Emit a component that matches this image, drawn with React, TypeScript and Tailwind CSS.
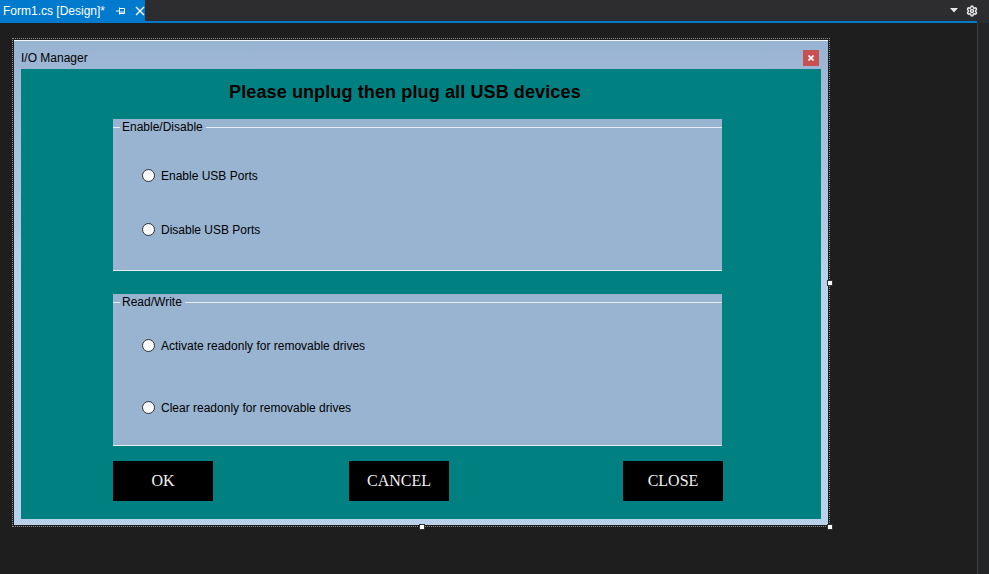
import { Settings } from "lucide-react";

// Radio row inside a group box
const Radio = ({ label }: { label: string }) => (
  <div className="flex h-4 items-center gap-[6px] pl-[29px]">
    <span className="h-[13px] w-[13px] rounded-full border border-[#333333] bg-gradient-to-b from-[#f4f4f4] to-white" />
    <span className="pt-px text-[12px] text-black">{label}</span>
  </div>
);

const GroupBox = ({ title, children }: { title: string; children: React.ReactNode }) => (
  <div className="flex h-[152px] w-[609px] flex-col border-b border-[#e4ecf4] bg-[#99b4d1]">
    <div className="flex h-4 items-center">
      <span className="h-px w-[7px] bg-[#e4ecf4]" />
      <span className="ml-[2px] mr-[3px] text-[12px] leading-4 text-black">{title}</span>
      <span className="h-px flex-1 bg-[#e4ecf4]" />
    </div>
    {children}
  </div>
);

const FormButton = ({ label, className = "" }: { label: string; className?: string }) => (
  <button
    className={`flex h-10 w-[100px] items-center justify-center bg-black font-['Liberation_Serif',serif] text-[16px] uppercase text-[#f2f2f2] ${className}`}
  >
    {label}
  </button>
);

const Handle = ({ className }: { className: string }) => (
  <span className={`absolute h-[6px] w-[6px] border border-[#333333] bg-white ${className}`} />
);

export default function App() {
  return (
    <div className="flex h-[574px] w-[989px] flex-col overflow-hidden bg-[#1e1e1e] font-['Liberation_Sans',Arial,sans-serif]">
      {/* document tab bar */}
      <div className="flex h-[21px] bg-[#2d2d30]">
        <div className="flex w-[145px] shrink-0 items-center whitespace-nowrap bg-[#007acc] pl-[3px] text-[12px] text-white">
          <span>Form1.cs [Design]*</span>
          <svg className="ml-[11px] shrink-0" width="10" height="8" viewBox="0 0 10 8" fill="none" stroke="white" strokeWidth="1">
            <path d="M0 4h3.5M3.5 0.5v7M3.5 1.5h5v5h-5M3.5 5h5" />
          </svg>
          <svg className="ml-[9px] shrink-0" width="10" height="10" viewBox="0 0 10 10" stroke="white" strokeWidth="1.4">
            <path d="M1 1l8 8M9 1l-8 8" />
          </svg>
        </div>
        <div className="flex flex-1 items-center justify-end gap-[8px] pr-[11px]">
          <svg width="8" height="5" viewBox="0 0 8 5">
            <path d="M0 0h8L4 4.5z" fill="#e6e6e6" />
          </svg>
          <Settings size={12} strokeWidth={3} className="text-[#e6e6e6]" />
        </div>
      </div>
      <div className="flex h-[2px]">
        <div className="w-[977px] bg-[#007acc]" />
        <div className="flex-1 bg-[#2d2d30]" />
      </div>

      <div className="flex flex-1">
        {/* designer surface */}
        <div className="flex-1 pl-[12px] pt-[15px]">
          <div className="relative w-fit border border-dotted border-[#8a8a8a] p-px">
            <div className="flex h-[485px] w-[814px] flex-col border-t border-[#f4f8fc] bg-gradient-to-b from-[#99b3d2] via-[#b9d1ea] to-[#b9d1ea]">
              <div className="flex h-[28px] items-center pl-[7px] pr-[9px] pt-[5px]">
                <span className="text-[12px] text-black">I/O Manager</span>
                <span className="ml-auto flex h-4 w-4 items-center justify-center bg-[#c75050]">
                  <svg width="6" height="6" viewBox="0 0 6 6" stroke="white" strokeWidth="1.6">
                    <path d="M0.5 0.5l5 5M5.5 0.5l-5 5" />
                  </svg>
                </span>
              </div>
              <div className="mx-[7px] flex h-[450px] flex-col items-start bg-[#008080] pl-[92px] pt-[12px]">
                <h1 className="ml-[116px] h-[22px] whitespace-nowrap text-[18px] font-bold leading-[22px] tracking-[0.12px] text-black">
                  Please unplug then plug all USB devices
                </h1>
                <div className="mt-[16px] flex flex-col">
                  <GroupBox title="Enable/Disable">
                    <div className="mt-[32px]">
                      <Radio label="Enable USB Ports" />
                    </div>
                    <div className="mt-[38px]">
                      <Radio label="Disable USB Ports" />
                    </div>
                  </GroupBox>
                  <div className="mt-[23px]">
                    <GroupBox title="Read/Write">
                      <div className="mt-[27px]">
                        <Radio label="Activate readonly for removable drives" />
                      </div>
                      <div className="mt-[46px]">
                        <Radio label="Clear readonly for removable drives" />
                      </div>
                    </GroupBox>
                  </div>
                  <div className="mt-[15px] flex w-[610px]">
                    <FormButton label="Ok" />
                    <FormButton label="Cancel" className="ml-[136px]" />
                    <FormButton label="Close" className="ml-auto" />
                  </div>
                </div>
              </div>
            </div>
            <Handle className="right-[-4px] top-[241px]" />
            <Handle className="bottom-[-4px] left-[406px]" />
            <Handle className="bottom-[-4px] right-[-4px]" />
          </div>
        </div>
        {/* right edge strip */}
        <div className="w-[12px] border-l border-[#3f3f46] bg-[#252526]" />
      </div>
    </div>
  );
}
